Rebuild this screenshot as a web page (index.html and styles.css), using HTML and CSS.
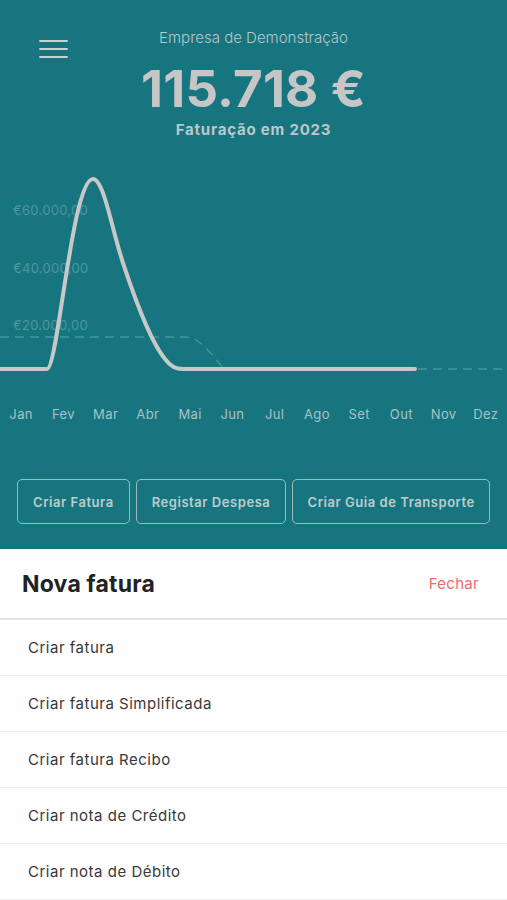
FILE: index.html
```html
<!DOCTYPE html>
<html>
<head>
    <title>Faturação</title>
    <link rel="stylesheet" href="styles.css">
</head>
<body>

<div class="hero">
  <div class="topbar">
    <button class="menu" aria-label="Menu">
      <span></span><span></span><span></span>
    </button>
    <div class="company">Empresa de Demonstração</div>
    <div class="spacer"></div>
  </div>

  <div class="amount">115.718 €</div>
  <div class="subtitle">Faturação em 2023</div>

  <svg class="chart" viewBox="0 160 507 225" width="507" height="225">
    <text class="axis" x="13" y="214">€60.000,00</text>
    <text class="axis" x="13" y="272">€40.000,00</text>
    <text class="axis" x="13" y="329">€20.000,00</text>
    <path class="avg" d="M0 336 H185 C200 336 210 352 224 368" />
    <path class="avg" d="M418 368 H507" />
    <path class="line" d="M0 368 H47 C58 368 72 178 93 178 C104 178 112 230 124 265 C134 295 150 340 165 358 C171 366 176 368 183 368 H415" />
  </svg>

  <div class="months">
    <span>Jan</span><span>Fev</span><span>Mar</span><span>Abr</span>
    <span>Mai</span><span>Jun</span><span>Jul</span><span>Ago</span>
    <span>Set</span><span>Out</span><span>Nov</span><span>Dez</span>
  </div>

  <div class="actions">
    <button class="action">Criar Fatura</button>
    <button class="action">Registar Despesa</button>
    <button class="action">Criar Guia de Transporte</button>
  </div>
</div>

<div class="sheet">
  <div class="sheet-header">
    <h2 class="sheet-title">Nova fatura</h2>
    <button class="close">Fechar</button>
  </div>
  <ul class="options">
    <li>Criar fatura</li>
    <li>Criar fatura Simplificada</li>
    <li>Criar fatura Recibo</li>
    <li>Criar nota de Crédito</li>
    <li>Criar nota de Débito</li>
  </ul>
</div>

</body>
</html>
```

FILE: styles.css
```css
body {
    margin: 0;
    padding: 0;
    width: 507px;
    height: 900px;
    overflow: hidden;
    background-color: #fff;
    font-family: Inter, "Noto Sans", sans-serif;
}

button {
    font-family: inherit;
    background: none;
    border: none;
    padding: 0;
    cursor: pointer;
}

.hero {
    background-color: #177580;
    height: 549px;
    box-sizing: border-box;
    padding-top: 27px;
}

.topbar {
    display: grid;
    grid-template-columns: 100px 1fr 100px;
    align-items: start;
    height: 22px;
}

.menu {
    display: flex;
    flex-direction: column;
    gap: 6px;
    margin: 13px 0 0 39px;
    width: 29px;
}

.menu span {
    display: block;
    height: 2px;
    background-color: #c9cfd1;
    border-radius: 1px;
}

.company {
    text-align: center;
    color: #bcc6c9;
    font-size: 15px;
    font-weight: 300;
    line-height: 22px;
}

.amount {
    margin-top: 9px;
    text-align: center;
    color: #c6c6c6;
    font-size: 51px;
    font-weight: 700;
    line-height: 62px;
    letter-spacing: 0.2px;
}

.subtitle {
    text-align: center;
    color: #bfc6c8;
    font-size: 15px;
    font-weight: 700;
    line-height: 20px;
    letter-spacing: 0.8px;
}

.chart {
    display: block;
    margin-top: 21px;
}

.axis {
    font-family: Inter, "Noto Sans", sans-serif;
    font-size: 13px;
    letter-spacing: 0.3px;
    fill: #4f969f;
}

.line {
    fill: none;
    stroke: #c8c8c8;
    stroke-width: 4;
    stroke-linecap: round;
    stroke-linejoin: round;
}

.avg {
    fill: none;
    stroke: #4a939c;
    stroke-width: 1.3;
    stroke-dasharray: 9 6;
}

.months {
    display: grid;
    grid-template-columns: repeat(12, 1fr);
    margin-top: 18px;
    color: #a9c2c6;
    font-size: 13px;
    line-height: 20px;
    letter-spacing: 0.4px;
    text-align: center;
}

.actions {
    display: flex;
    gap: 6px;
    padding: 55px 17px 0 17px;
}

.action {
    height: 45px;
    padding: 0 15px;
    border: 1.5px solid #9dbcc0;
    border-radius: 5px;
    color: #c0cbcd;
    font-size: 13px;
    font-weight: 600;
    letter-spacing: 0.55px;
    white-space: nowrap;
    flex: 0 0 auto;
}

.action:last-child {
    flex: 1 1 0;
    min-width: 0;
    padding: 0;
}

.sheet {
    background-color: #fff;
}

.sheet-header {
    display: flex;
    justify-content: space-between;
    align-items: center;
    height: 69px;
    padding: 0 28px 0 22px;
    border-bottom: 2px solid #e3e3e3;
}

.sheet-title {
    margin: 0;
    color: #222;
    font-size: 23px;
    font-weight: 700;
    letter-spacing: 0.2px;
}

.close {
    color: #f06b6e;
    font-size: 15px;
    letter-spacing: 0.3px;
}

.options {
    list-style: none;
    margin: 0;
    padding: 0;
}

.options li {
    height: 55px;
    line-height: 55px;
    padding-left: 28px;
    border-bottom: 1px solid #efefef;
    color: #383838;
    font-size: 15px;
    letter-spacing: 0.5px;
}
```
